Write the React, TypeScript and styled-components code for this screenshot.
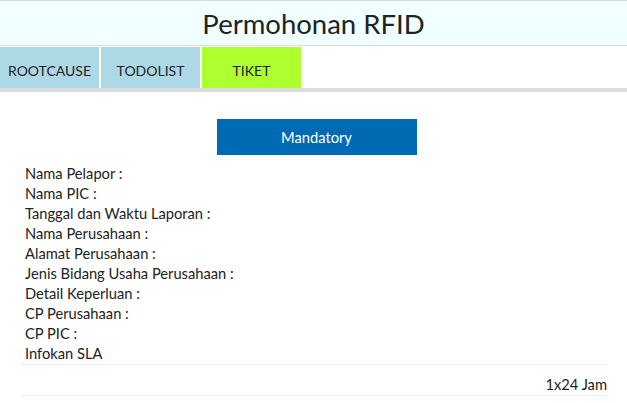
import React from 'react';
import styled, { createGlobalStyle } from 'styled-components';

const GlobalStyle = createGlobalStyle`
    body {
        margin: 0;
        background: #fff;
        font-family: Lato, "Open Sans", sans-serif;
        color: #222;
    }
`;

const Page = styled.div`
    width: 627px;
    min-height: 403px;
    overflow: hidden;
`;

const TitleBar = styled.header`
    height: 44px;
    background: #f0ffff;
    border-top: 1px solid #d9dde0;
    border-bottom: 1px solid #d9dde0;
    display: flex;
    align-items: center;
    justify-content: center;
`;

const Title = styled.h1`
    margin: 0;
    font-size: 27.5px;
    font-weight: 400;
    color: #222;
`;

const TabRow = styled.nav`
    display: flex;
    gap: 2px;
    margin-top: 1px;
    border-bottom: 4px solid #dcdcdc;
`;

const Tab = styled.div<{ $active?: boolean }>`
    width: 99px;
    height: 41px;
    box-sizing: border-box;
    padding-top: 15px;
    text-align: center;
    font-size: 14px;
    color: #222;
    background: ${p => (p.$active ? '#adff2f' : '#add8e6')};
`;

const Content = styled.main`
    padding: 27px 19px 0 22px;
    display: flex;
    flex-direction: column;
`;

const MandatoryButton = styled.div`
    align-self: center;
    margin-left: 3px;
    width: 200px;
    height: 36px;
    background: #006bb3;
    color: #fff;
    font-size: 14.7px;
    display: flex;
    align-items: center;
    justify-content: center;
`;

const FieldList = styled.ul`
    list-style: none;
    margin: 8px 0 0;
    padding: 0 0 1px 3px;
    border-bottom: 1px dotted #ece6c4;
`;

const Field = styled.li`
    font-size: 14.7px;
    line-height: 20px;
    height: 20px;
`;

const SlaRow = styled.div`
    text-align: right;
    font-size: 14.7px;
    line-height: 20px;
    padding: 9px 1px 1px;
    border-bottom: 1px dotted #ece6c4;
`;

const fields = [
    'Nama Pelapor :',
    'Nama PIC :',
    'Tanggal dan Waktu Laporan :',
    'Nama Perusahaan :',
    'Alamat Perusahaan :',
    'Jenis Bidang Usaha Perusahaan :',
    'Detail Keperluan :',
    'CP Perusahaan :',
    'CP PIC :',
    'Infokan SLA',
];

export default function App() {
    return (
        <Page>
            <GlobalStyle />
            <TitleBar>
                <Title>Permohonan RFID</Title>
            </TitleBar>
            <TabRow>
                <Tab>ROOTCAUSE</Tab>
                <Tab>TODOLIST</Tab>
                <Tab $active>TIKET</Tab>
            </TabRow>
            <Content>
                <MandatoryButton>Mandatory</MandatoryButton>
                <FieldList>
                    {fields.map(f => (
                        <Field key={f}>{f}</Field>
                    ))}
                </FieldList>
                <SlaRow>1x24 Jam</SlaRow>
            </Content>
        </Page>
    );
}
